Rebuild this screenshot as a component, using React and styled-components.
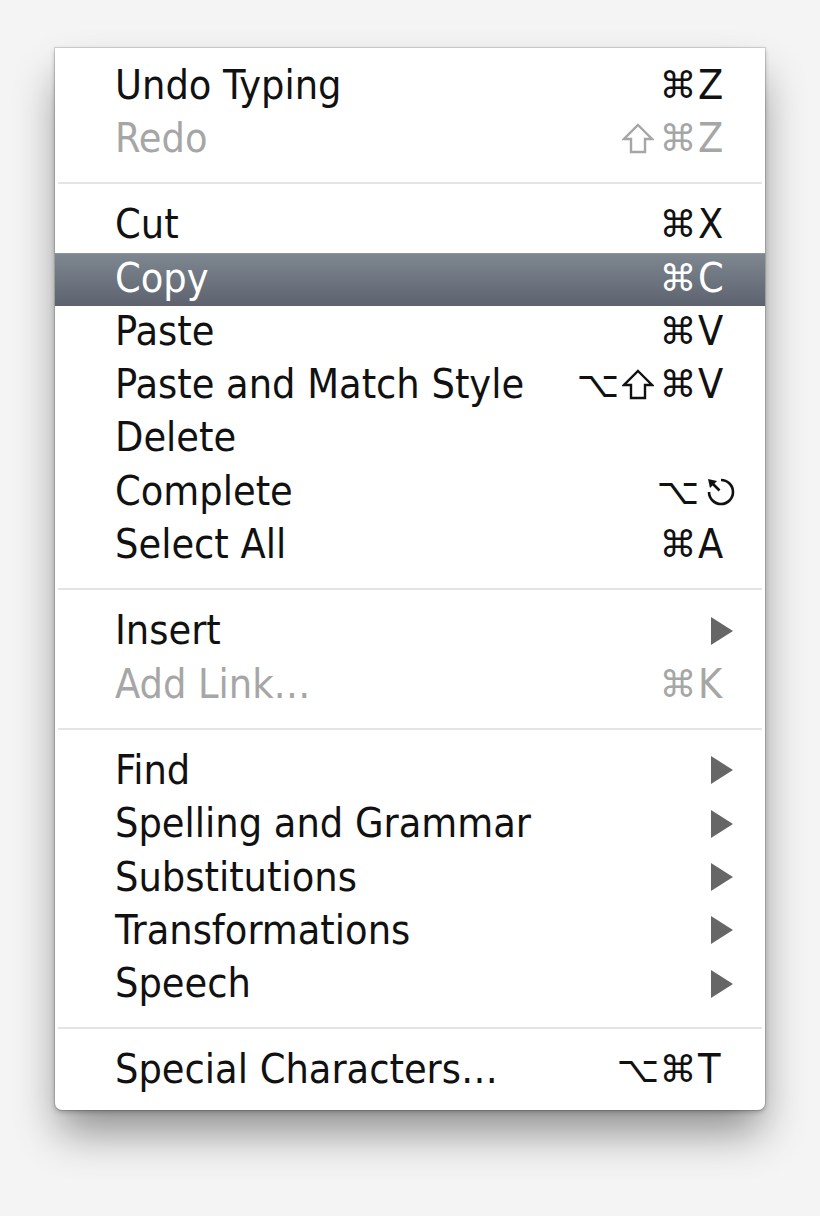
import React from 'react';
import styled, { createGlobalStyle, css } from 'styled-components';

const GlobalStyle = createGlobalStyle`
  html, body {
    margin: 0;
    padding: 0;
    background: #f4f4f4;
  }
  body {
    font-family: "DejaVu Sans", sans-serif;
  }
`;

const Page = styled.div`
  width: 820px;
  height: 1216px;
  box-sizing: border-box;
  padding: 48px 0 0 55px;
  background: #f4f4f4;
`;

const Menu = styled.ul`
  list-style: none;
  margin: 0;
  width: 710px;
  box-sizing: border-box;
  padding: 12px 0;
  background: #ffffff;
  border-radius: 0 0 7px 7px;
  box-shadow:
    0 0 0 1px rgba(0, 0, 0, 0.12),
    0 2px 5px rgba(0, 0, 0, 0.25),
    0 26px 44px -4px rgba(0, 0, 0, 0.42);
`;

const Row = styled.li`
  display: flex;
  align-items: center;
  height: 53.3px;
  padding: 0 27px 3px 60px;
  box-sizing: border-box;
  color: #111;
  ${({ $disabled }) => $disabled && css`
    color: #a6a6a6;
  `}
  ${({ $active }) => $active && css`
    color: #ffffff;
    background: linear-gradient(#7f8791, #5c636e);
    box-shadow: inset 0 1px 0 #8c939c;
  `}
`;

const Label = styled.span`
  flex: 1;
  font-family: "DejaVu Sans Condensed", "DejaVu Sans", sans-serif;
  font-stretch: condensed;
  font-size: 41px;
  line-height: 1;
  white-space: nowrap;
`;

const Mods = styled.span`
  display: flex;
  align-items: center;
`;

const Mod = styled.span`
  display: flex;
  justify-content: center;
  align-items: center;
  width: 40px;
  font-family: "DejaVu Sans", sans-serif;
  font-size: 37px;
  line-height: 1;
`;

const Key = styled.span`
  display: flex;
  align-items: center;
  width: 40px;
  font-family: "DejaVu Sans Condensed", "DejaVu Sans", sans-serif;
  font-stretch: condensed;
  font-size: 41px;
  line-height: 1;
`;

const Separator = styled.li`
  height: 33px;
  display: flex;
  align-items: center;
  padding: 0 3px;

  &::before {
    content: '';
    flex: 1;
    height: 2px;
    background: #e4e4e4;
  }
`;

const Arrow = () => (
  <svg width="22" height="28" viewBox="0 0 22 28" style={{ marginLeft: 13 }}>
    <polygon points="0,0 22,14 0,28" fill="#666" />
  </svg>
);

const Shift = () => (
  <svg width="32" height="31" viewBox="0 0 32 31">
    <polygon
      points="16,2 30,16 23,16 23,29 9,29 9,16 2,16"
      fill="none"
      stroke="currentColor"
      strokeWidth="2.4"
      strokeLinejoin="miter"
    />
  </svg>
);

const Escape = () => (
  <svg width="31" height="31" viewBox="0 0 31 31" style={{ marginLeft: 7 }}>
    <path d="M16 4 A12 12 0 1 1 4 16" fill="none" stroke="currentColor" strokeWidth="2.6" />
    <line x1="14.5" y1="14.5" x2="7" y2="7" stroke="currentColor" strokeWidth="2.6" />
    <polygon points="3,3 12,5 5,12" fill="currentColor" />
  </svg>
);

const items = [
  { label: 'Undo Typing', mods: ['⌘'], key: 'Z' },
  { label: 'Redo', mods: ['⇧', '⌘'], key: 'Z', disabled: true },
  'sep',
  { label: 'Cut', mods: ['⌘'], key: 'X' },
  { label: 'Copy', mods: ['⌘'], key: 'C', active: true },
  { label: 'Paste', mods: ['⌘'], key: 'V' },
  { label: 'Paste and Match Style', mods: ['⌥', '⇧', '⌘'], key: 'V' },
  { label: 'Delete' },
  { label: 'Complete', mods: ['⌥'], key: 'esc' },
  { label: 'Select All', mods: ['⌘'], key: 'A' },
  'sep',
  { label: 'Insert', submenu: true },
  { label: 'Add Link…', mods: ['⌘'], key: 'K', disabled: true },
  'sep',
  { label: 'Find', submenu: true },
  { label: 'Spelling and Grammar', submenu: true },
  { label: 'Substitutions', submenu: true },
  { label: 'Transformations', submenu: true },
  { label: 'Speech', submenu: true },
  'sep',
  { label: 'Special Characters…', mods: ['⌥', '⌘'], key: 'T' },
];

function MenuItem({ item }) {
  return (
    <Row $disabled={item.disabled} $active={item.active}>
      <Label>{item.label}</Label>
      {item.mods && (
        <Mods>
          {item.mods.map((m, i) => (
            <Mod key={i}>{m === '⇧' ? <Shift /> : m}</Mod>
          ))}
        </Mods>
      )}
      <Key>
        {item.submenu ? <Arrow /> : item.key === 'esc' ? <Escape /> : item.key}
      </Key>
    </Row>
  );
}

export default function App() {
  return (
    <>
      <GlobalStyle />
      <Page>
        <Menu>
          {items.map((item, i) =>
            item === 'sep' ? <Separator key={i} /> : <MenuItem key={i} item={item} />
          )}
        </Menu>
      </Page>
    </>
  );
}
